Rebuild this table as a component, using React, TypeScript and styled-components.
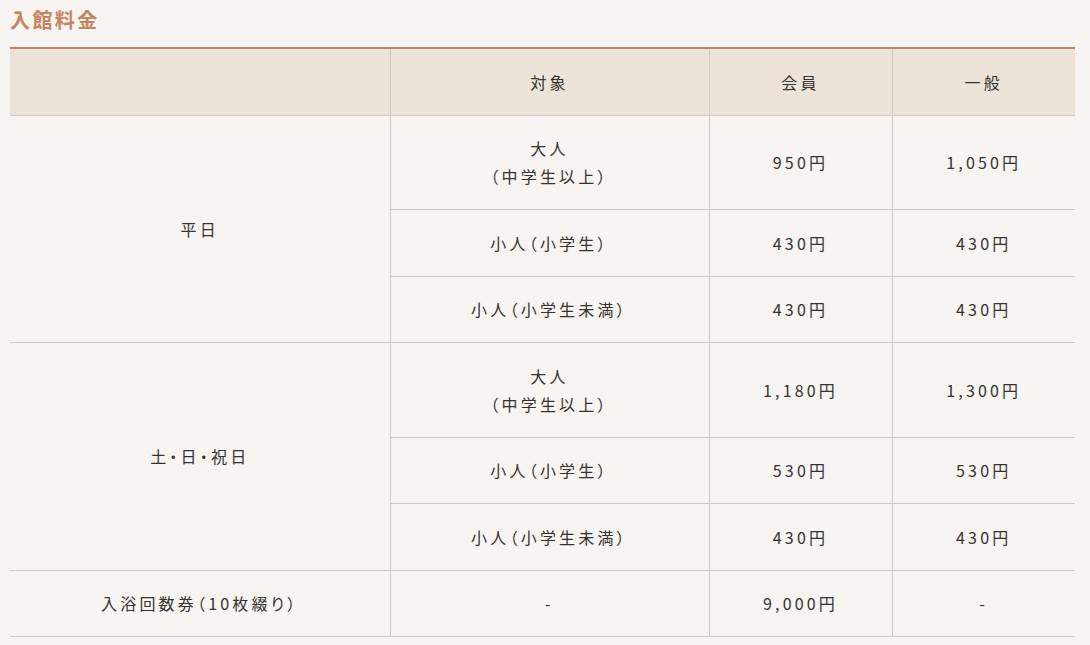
import React from "react";
import styled, { createGlobalStyle } from "styled-components";

const GlobalStyle = createGlobalStyle`
	html, body {
		margin: 0;
		padding: 0;
		background: #F7F5F1;
	}
	body {
		font-family: "Noto Sans CJK JP", "Noto Sans", sans-serif;
		color: #333333;
	}
`

const StyledPrice = styled.section`
	box-sizing: border-box;
	width: 1090px;
	padding: 6px 15px 0 10px;

	.title {
		margin: 0 0 13px 0;
		color: #C8845C;
		font-weight: 700;
		font-size: 20px;
		line-height: 28px;
		letter-spacing: 0.12em;
	}
`

const Table = styled.table`
	width: 1065px;
	border-collapse: collapse;
	table-layout: fixed;
	font-size: 16px;
	line-height: 28px;
	letter-spacing: 0.2em;
	font-feature-settings: "palt";

	thead tr {
		border-top: 2px solid #C8825C;
		background: #ECE4D8;
	}
`

const Cell = styled.td<{ $first?: boolean }>`
	padding: 18.75px 10px;
	text-align: center;
	vertical-align: middle;
	font-weight: 400;
	border-bottom: 1px solid #CCCAC6;
	border-left: ${(p) => (p.$first ? "none" : "1px solid #CCCAC6")};
`

interface Row {
	target: React.ReactNode;
	member: string;
	general: string;
}

const groups: { label: string; rows: Row[] }[] = [
	{
		label: "平日",
		rows: [
			{ target: <>大人<br />（中学生以上）</>, member: "950円", general: "1,050円" },
			{ target: "小人（小学生）", member: "430円", general: "430円" },
			{ target: "小人（小学生未満）", member: "430円", general: "430円" },
		],
	},
	{
		label: "土・日・祝日",
		rows: [
			{ target: <>大人<br />（中学生以上）</>, member: "1,180円", general: "1,300円" },
			{ target: "小人（小学生）", member: "530円", general: "530円" },
			{ target: "小人（小学生未満）", member: "430円", general: "430円" },
		],
	},
]

export default function App() {
	return (
		<>
			<GlobalStyle />
			<StyledPrice>
				<h2 className="title">入館料金</h2>
				<Table>
					<colgroup>
						<col style={{ width: 380 }} />
						<col style={{ width: 319 }} />
						<col style={{ width: 183 }} />
						<col style={{ width: 183 }} />
					</colgroup>
					<thead>
						<tr>
							<Cell as="th" $first></Cell>
							<Cell as="th">対象</Cell>
							<Cell as="th">会員</Cell>
							<Cell as="th">一般</Cell>
						</tr>
					</thead>
					<tbody>
						{groups.map((g) =>
							g.rows.map((r, i) => (
								<tr key={g.label + i}>
									{i === 0 && (
										<Cell $first rowSpan={g.rows.length}>{g.label}</Cell>
									)}
									<Cell>{r.target}</Cell>
									<Cell>{r.member}</Cell>
									<Cell>{r.general}</Cell>
								</tr>
							))
						)}
						<tr>
							<Cell $first>入浴回数券（10枚綴り）</Cell>
							<Cell>-</Cell>
							<Cell>9,000円</Cell>
							<Cell>-</Cell>
						</tr>
					</tbody>
				</Table>
			</StyledPrice>
		</>
	)
}
